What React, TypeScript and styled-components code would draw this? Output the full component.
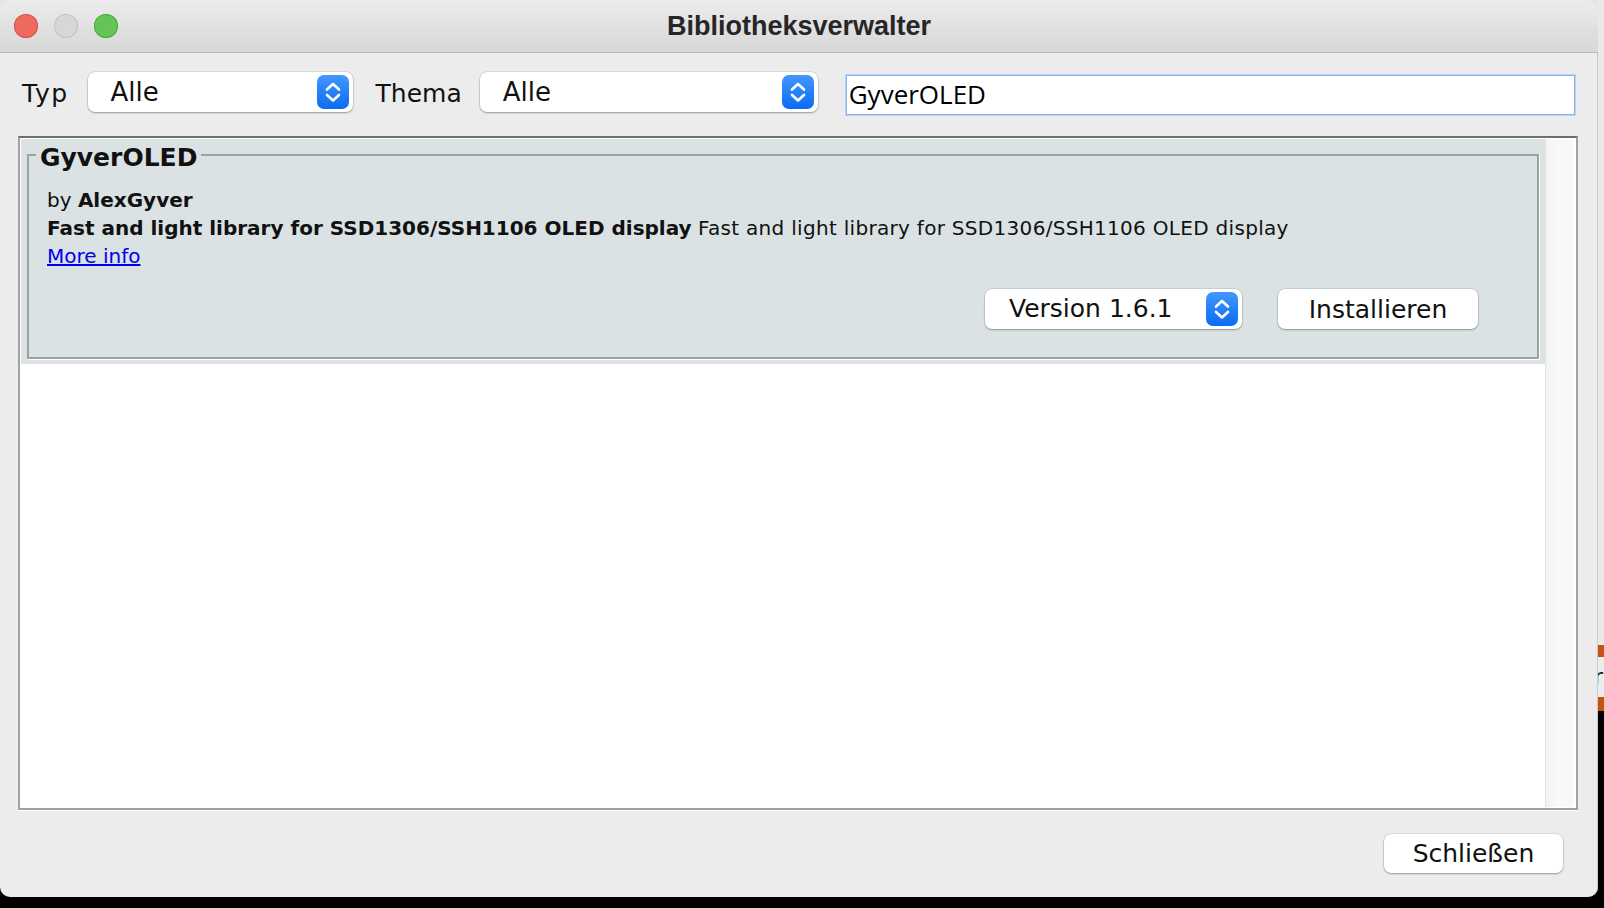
import React from "react";
import styled, { createGlobalStyle } from "styled-components";

const GlobalStyle = createGlobalStyle`
  html, body { margin: 0; padding: 0; background: #000; }
  body { font-family: "DejaVu Sans", "Liberation Sans", sans-serif; }
  * { box-sizing: border-box; }
`;

const Page = styled.div`
  display: flex;
  width: 1604px;
  height: 908px;
  overflow: hidden;
  background: linear-gradient(to bottom, #e4e4e4 0, #e4e4e4 50%, #000 50%, #000 100%);
`;

const Window = styled.div`
  flex: none;
  width: 1598px;
  height: 897px;
  display: flex;
  flex-direction: column;
  background: #ececec;
  border-radius: 10px;
  overflow: hidden;
  box-shadow: inset -1px 0 0 #cacaca;
`;

const TitleBar = styled.div`
  height: 53px;
  flex: none;
  display: grid;
  grid-template-columns: 1fr auto 1fr;
  align-items: center;
  padding: 0 14px;
  background: linear-gradient(to bottom, #ececec, #d7d7d7);
  border-bottom: 1px solid #b9b9b9;
`;

const Lights = styled.div`
  display: flex;
  gap: 16px;
`;

const Light = styled.span<{ $bg: string; $line: string }>`
  width: 24px;
  height: 24px;
  border-radius: 50%;
  background: ${(p) => p.$bg};
  box-shadow: inset 0 0 0 1px ${(p) => p.$line};
`;

const Title = styled.div`
  font-family: "Liberation Sans", Arial, sans-serif;
  font-weight: bold;
  font-size: 27px;
  color: #262626;
`;

const Toolbar = styled.div`
  display: flex;
  align-items: flex-start;
  padding: 19px 23px 0 22px;
`;

const Label = styled.span<{ $gap: number; $ls?: number }>`
  font-size: 25px;
  line-height: 40px;
  margin-top: 2px;
  letter-spacing: ${(p) => p.$ls ?? 0}px;
  color: #111;
  margin-right: ${(p) => p.$gap}px;
`;

const Combo = styled.div<{ $w: number; $size: number; $pl: number; $mr?: number }>`
  flex: none;
  width: ${(p) => p.$w}px;
  height: 40px;
  display: flex;
  align-items: center;
  justify-content: space-between;
  padding: 0 4px 0 ${(p) => p.$pl}px;
  margin-right: ${(p) => p.$mr ?? 0}px;
  background: #fff;
  border-radius: 7px;
  box-shadow: 0 0 0 0.5px rgba(0, 0, 0, 0.14), 0 1px 2px rgba(0, 0, 0, 0.3);
  font-size: ${(p) => p.$size}px;
  color: #111;
`;

const StepperBox = styled.span`
  width: 32px;
  height: 34px;
  border-radius: 7px;
  background: linear-gradient(to bottom, #4397ff, #0a6cf2);
  display: flex;
`;

const Stepper = () => (
  <StepperBox>
    <svg width="32" height="34" viewBox="0 0 32 34">
      <path
        d="M10 14.5 L16 9 L22 14.5 M10 20 L16 25.5 L22 20"
        fill="none"
        stroke="#fff"
        strokeWidth="2.6"
        strokeLinecap="round"
        strokeLinejoin="round"
      />
    </svg>
  </StepperBox>
);

const Search = styled.input`
  flex: 1;
  min-width: 0;
  height: 40px;
  margin-top: 3px;
  padding: 0 0 3px 2px;
  border: 1px solid #86b4ee;
  box-shadow: 0 0 0 1px rgba(134, 180, 238, 0.45);
  background: #fff;
  font-family: "Open Sans", "Noto Sans", sans-serif;
  font-size: 26px;
  color: #000;
  outline: none;
`;

const List = styled.div`
  flex: none;
  height: 674px;
  margin: 21px 20px 0 18px;
  display: flex;
  padding: 1px;
  background: #fff;
  border: 2px solid #a2a2a2;
  border-top-color: #6e6e6e;
  box-shadow: 0 1px 0 #fff;
`;

const Viewport = styled.div`
  flex: 1;
  display: flex;
  flex-direction: column;
  background: #fff;
`;

const Scrollbar = styled.div`
  width: 30px;
  flex: none;
  background: linear-gradient(to right, #f2f2f2, #fafafa 40%, #f7f7f7);
  border-left: 1px solid #e3e3e3;
  border-right: 2px solid #fdfdfd;
`;

const Card = styled.div`
  background: #dae2e3;
  padding: 0 6px 5px 6px;
`;

const Group = styled.fieldset`
  margin: 0;
  padding: 0;
  min-width: 0;
  border: 2px solid #9ca1a2;
  box-shadow: 1px 1px 0 #fff;
`;

const Legend = styled.legend`
  margin-left: 7px;
  padding: 7px 4px 0;
  font-size: 25px;
  line-height: 24px;
  font-weight: bold;
  color: #111;
`;

const CardBody = styled.div`
  padding: 16px 59px 28px 18px;
  font-size: 20px;
  line-height: 28px;
  color: #111;
`;

const Line = styled.div`
  white-space: nowrap;
`;

const Strong = styled.b`
  font-weight: bold;
`;

const Desc = styled.span`
  letter-spacing: 0.3px;
`;

const Link = styled.a`
  color: #0000ee;
  text-decoration: underline;
  cursor: pointer;
`;

const Actions = styled.div`
  display: flex;
  justify-content: flex-end;
  align-items: center;
  gap: 36px;
  margin-top: 19px;
`;

const PushButton = styled.button<{ $w: number; $h: number; $size: number }>`
  flex: none;
  width: ${(p) => p.$w}px;
  height: ${(p) => p.$h}px;
  padding: 0;
  border: none;
  border-radius: 7px;
  background: #fff;
  box-shadow: 0 0 0 0.5px rgba(0, 0, 0, 0.14), 0 1px 2px rgba(0, 0, 0, 0.3);
  font-family: "DejaVu Sans", sans-serif;
  font-size: ${(p) => p.$size}px;
  color: #111;
`;

const Footer = styled.div`
  display: flex;
  justify-content: flex-end;
  padding: 24px 35px 24px 0;
`;

const Strip = styled.div`
  flex: none;
  width: 6px;
  display: flex;
  flex-direction: column;
`;

const StripPane = styled.div<{ $h: number; $bg: string }>`
  flex: none;
  height: ${(p) => p.$h}px;
  background: ${(p) => p.$bg};
  overflow: hidden;
  font-family: "DejaVu Sans", sans-serif;
  font-size: 22px;
  line-height: 40px;
  color: #111;
  white-space: nowrap;
`;

const StripGlyph = styled.span`
  display: inline-block;
  margin-left: -4px;
`;

export default function App() {
  return (
    <>
      <GlobalStyle />
      <Page>
        <Window>
          <TitleBar>
            <Lights>
              <Light $bg="#ee6a5f" $line="#d4574c" />
              <Light $bg="#d7d7d7" $line="#c2c2c2" />
              <Light $bg="#62c555" $line="#52a843" />
            </Lights>
            <Title>Bibliotheksverwalter</Title>
            <span />
          </TitleBar>

          <Toolbar>
            <Label $gap={19} $ls={1.5}>Typ</Label>
            <Combo $w={265} $size={26} $pl={23} $mr={23}>
              <span>Alle</span>
              <Stepper />
            </Combo>
            <Label $gap={18}>Thema</Label>
            <Combo $w={338} $size={26} $pl={23} $mr={28}>
              <span>Alle</span>
              <Stepper />
            </Combo>
            <Search readOnly value="GyverOLED" />
          </Toolbar>

          <List>
            <Viewport>
              <Card>
                <Group>
                  <Legend>GyverOLED</Legend>
                  <CardBody>
                    <Line>
                      by <Strong>AlexGyver</Strong>
                    </Line>
                    <Line>
                      <Strong>Fast and light library for SSD1306/SSH1106 OLED display</Strong>{" "}
                      <Desc>Fast and light library for SSD1306/SSH1106 OLED display</Desc>
                    </Line>
                    <Line>
                      <Link>More info</Link>
                    </Line>
                    <Actions>
                      <Combo $w={257} $size={25} $pl={24}>
                        <span>Version 1.6.1</span>
                        <Stepper />
                      </Combo>
                      <PushButton $w={200} $h={40} $size={25}>
                        Installieren
                      </PushButton>
                    </Actions>
                  </CardBody>
                </Group>
              </Card>
            </Viewport>
            <Scrollbar />
          </List>

          <Footer>
            <PushButton $w={179} $h={39} $size={25}>
              Schließen
            </PushButton>
          </Footer>
        </Window>

        <Strip>
          <StripPane $h={645} $bg="#e9e9e9" />
          <StripPane $h={12} $bg="#c4540f" />
          <StripPane $h={40} $bg="#ececec">
            <StripGlyph>r</StripGlyph>
          </StripPane>
          <StripPane $h={14} $bg="#c4540f" />
        </Strip>
      </Page>
    </>
  );
}
